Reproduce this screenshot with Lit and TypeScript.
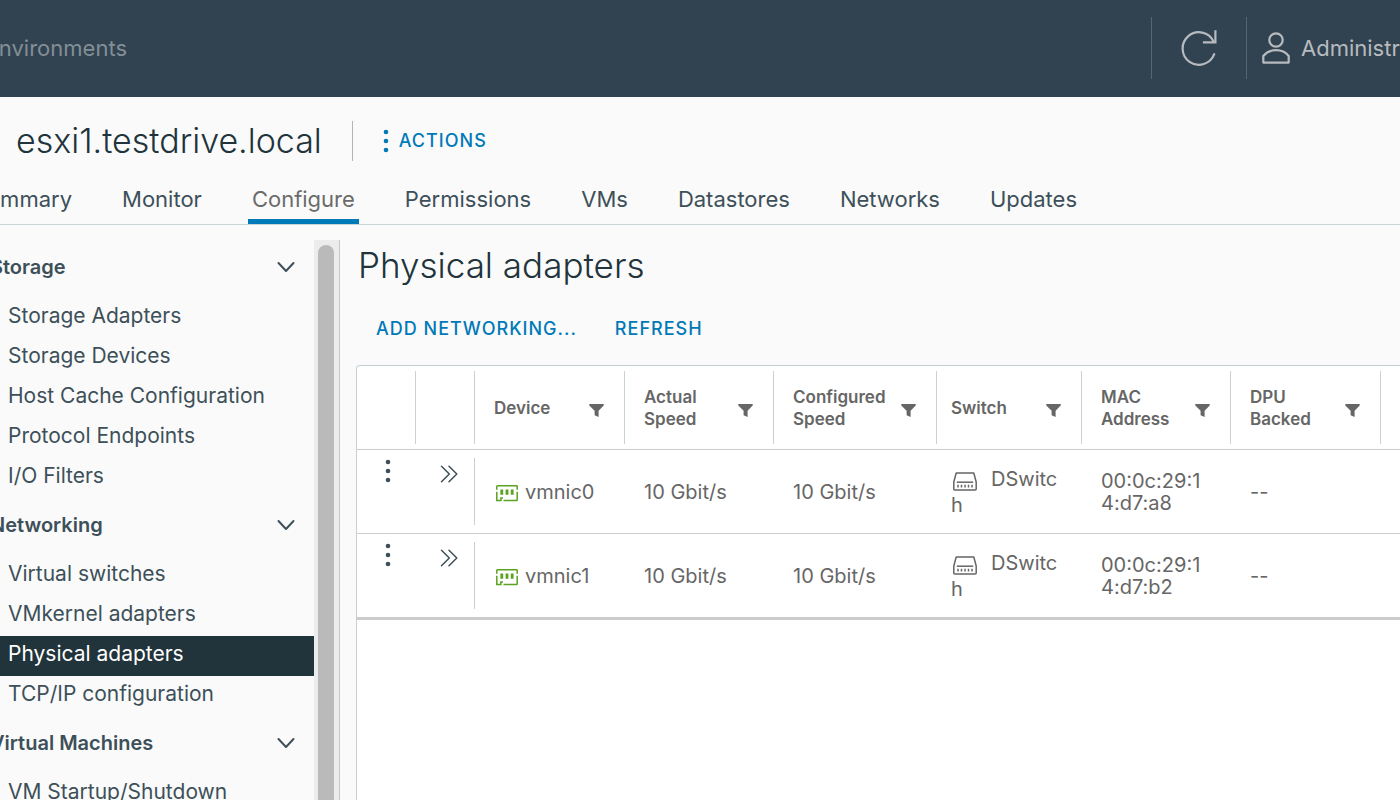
import { LitElement, html, css, svg } from "lit";
import { customElement, state } from "lit/decorators.js";
import { classMap } from "lit/directives/class-map.js";

interface Group {
  title: string;
  items: string[];
}

interface Adapter {
  device: string;
  actual: string;
  configured: string;
  vswitch: string;
  mac: string;
  dpu: string;
}

const TABS = ["Summary", "Monitor", "Configure", "Permissions", "VMs", "Datastores", "Networks", "Updates"];

const GROUPS: Group[] = [
  {
    title: "Storage",
    items: ["Storage Adapters", "Storage Devices", "Host Cache Configuration", "Protocol Endpoints", "I/O Filters"],
  },
  {
    title: "Networking",
    items: ["Virtual switches", "VMkernel adapters", "Physical adapters", "TCP/IP configuration"],
  },
  { title: "Virtual Machines", items: ["VM Startup/Shutdown"] },
];

const COLUMNS = ["Device", "Actual Speed", "Configured Speed", "Switch", "MAC Address", "DPU Backed"];

const ADAPTERS: Adapter[] = [
  { device: "vmnic0", actual: "10 Gbit/s", configured: "10 Gbit/s", vswitch: "DSwitch", mac: "00:0c:29:14:d7:a8", dpu: "--" },
  { device: "vmnic1", actual: "10 Gbit/s", configured: "10 Gbit/s", vswitch: "DSwitch", mac: "00:0c:29:14:d7:b2", dpu: "--" },
];

const dots = html`<svg class="dots" width="6" height="24" viewBox="0 0 6 24" aria-hidden="true">
  ${[3, 12, 21].map((y) => svg`<circle cx="3" cy=${y} r="2.3" fill="currentColor"></circle>`)}
</svg>`;

const refreshIcon = html`<svg width="36" height="38" viewBox="0 0 36 38" fill="none" stroke="currentColor" stroke-width="2.2" stroke-linecap="round" aria-hidden="true">
  <path d="M33.2 25.2A16.3 16.3 0 1 1 32.6 12.4" />
  <path d="M34.4 2.4V13.4H23" stroke-linecap="square" />
</svg>`;

const userIcon = html`<svg width="28" height="32" viewBox="0 0 28 32" fill="none" stroke="currentColor" stroke-width="2.2" stroke-linejoin="round" aria-hidden="true">
  <circle cx="14" cy="8" r="6.7" />
  <path d="M1.3 30.6V24C4.2 20.3 8.8 18.2 14 18.2S23.8 20.3 26.7 24V30.6Z" />
</svg>`;

const chevron = html`<svg width="18" height="12" viewBox="0 0 18 12" fill="none" stroke="currentColor" stroke-width="2" stroke-linecap="round" stroke-linejoin="round" aria-hidden="true">
  <path d="M1.5 2L9 10L16.5 2" />
</svg>`;

const expandIcon = html`<svg width="18" height="18" viewBox="0 0 18 18" fill="none" stroke="currentColor" stroke-width="1.5" stroke-linecap="round" stroke-linejoin="round" aria-hidden="true">
  <path d="M1.5 1.2L9.3 9L1.5 16.8M9 1.2L16.8 9L9 16.8" />
</svg>`;

const filterIcon = html`<svg width="15" height="13" viewBox="0 0 15 13" aria-hidden="true">
  <path d="M0.3 0H14.7V1.5L9.6 6.8V13L5.6 11.2V6.8L0.3 1.5Z" fill="currentColor" />
</svg>`;

const nicIcon = html`<svg class="nic" width="22" height="17" viewBox="0 0 22 17" fill="none" stroke="#5aa220" stroke-width="1.5" aria-hidden="true">
  <path d="M0.8 4.8V1.5Q0.8 0.8 1.5 0.8H20.5Q21.2 0.8 21.2 1.5V4.8" />
  <path d="M21.2 6.8V14.9Q21.2 15.6 20.5 15.6H7.5M0.8 6.8V15.6H4.9V13H7" />
  <path d="M5.8 4.5V9.8M11 4.5V9.8M16.2 4.5V9.8" stroke-width="2.8" />
</svg>`;

const switchIcon = html`<svg class="switch" width="24" height="19" viewBox="0 0 24 19" fill="none" stroke="currentColor" stroke-width="1.5" stroke-linejoin="round" aria-hidden="true">
  <path d="M3.2 1H20.8L23.2 10V17Q23.2 18 22.2 18H1.800Q0.8 18 0.8 17V10Z" />
  <path d="M3.8 10.2H20.2" />
  <path d="M5 12.8V15.6M8.5 12.8V15.6M12 12.8V15.6M15.5 12.8V15.6M19 12.8V15.6" />
</svg>`;

@customElement("app-root")
export class AppRoot extends LitElement {
  @state() private tab = "Configure";
  @state() private item = "Physical adapters";

  static styles = css`
    :host {
      display: flex;
      flex-direction: column;
      height: 100vh;
      overflow: hidden;
      background: #fafafa;
      color: #666;
      font-family: Inter, "Open Sans", sans-serif;
      font-size: 20px;
    }
    * {
      box-sizing: border-box;
    }
    button {
      border: 0;
      padding: 0;
      background: none;
      color: inherit;
      font: inherit;
      cursor: pointer;
    }
    a {
      color: inherit;
      text-decoration: none;
    }
    svg {
      flex: none;
    }
    .top {
      flex: none;
      display: flex;
      align-items: center;
      height: 97px;
      padding-bottom: 2px;
      background: #314351;
      color: #b7bbbf;
    }
    .crumb {
      display: flex;
      justify-content: flex-end;
      width: 127px;
      margin-right: auto;
      overflow: hidden;
      color: #838e97;
      font-size: 22px;
    }
    .reload,
    .user {
      display: flex;
      align-items: center;
      height: 62px;
      border-left: 1px solid #566675;
    }
    .reload {
      justify-content: center;
      width: 95px;
    }
    .user {
      gap: 11px;
      width: 154px;
      padding-left: 15px;
      overflow: hidden;
      font-size: 22px;
    }
    .title {
      flex: none;
      display: flex;
      align-items: center;
      height: 88px;
      padding-left: 16px;
    }
    h1,
    h2 {
      margin: 0;
      color: #21333b;
      font-weight: 300;
      font-size: 35px;
      line-height: 40px;
    }
    .title h1 {
      padding-right: 30px;
      border-right: 1px solid #b3b3b3;
      font-size: 34px;
    }
    .link {
      display: flex;
      align-items: center;
      gap: 10px;
      color: #0079b8;
      font-size: 18px;
      line-height: 24px;
      font-weight: 500;
      letter-spacing: 1px;
    }
    .title .link {
      margin-left: 30px;
    }
    .tabs {
      flex: none;
      display: flex;
      gap: 42px;
      height: 40px;
      margin-left: -31px;
      border-bottom: 1px solid #ccd4d8;
      color: #3d5059;
      font-size: 22px;
    }
    .tab {
      height: 39px;
      padding: 0 4px 6px;
      line-height: 28px;
      border-bottom: 5px solid transparent;
    }
    .tab.active {
      color: #6b6b6b;
      border-color: #0079b8;
    }
    .body {
      flex: 1;
      min-height: 0;
      display: flex;
    }
    .side {
      flex: none;
      display: flex;
      width: 340px;
      padding-top: 15px;
      overflow: hidden;
    }
    .nav {
      flex: 1;
      min-width: 0;
      color: #3d5059;
    }
    .group {
      display: flex;
      align-items: center;
      justify-content: space-between;
      width: 100%;
      height: 58px;
      padding: 0 19px 4px 0;
      font-weight: 600;
      font-size: 20px;
    }
    .group span {
      margin-left: -10px;
    }
    .item {
      display: block;
      height: 40px;
      padding: 0 8px;
      line-height: 36px;
      font-size: 21px;
      white-space: nowrap;
    }
    .item.active {
      background: #21333b;
      color: #fff;
    }
    .track {
      width: 26px;
      padding: 5px 5px 0 4px;
      background: #ececec;
      border-right: 1px solid #c8c8c8;
    }
    .thumb {
      height: 100%;
      border-radius: 8px 8px 0 0;
      background: #bababa;
    }
    .main {
      flex: 1;
      min-width: 0;
      display: flex;
      flex-direction: column;
      padding: 20px 0 0 16px;
      overflow: hidden;
    }
    .main h2 {
      padding-left: 2px;
    }
    .actions {
      display: flex;
      gap: 38px;
      padding: 32px 20px 24px;
    }
    .grid {
      flex: 1;
      border: 1px solid #c5d0d5;
      border-width: 1px 0 0 1px;
      border-radius: 4px 0 0 0;
      background: #fff;
    }
    table {
      width: 100%;
      table-layout: fixed;
      border-collapse: separate;
      border-spacing: 0;
      border-bottom: 3px solid #ccc;
    }
    th,
    td {
      padding: 0 21px 0 19px;
      text-align: left;
      background: linear-gradient(#c8d2d6, #c8d2d6) right center / 1px 0 no-repeat;
    }
    th {
      height: 84px;
      border-bottom: 1px solid #ccc;
      font-size: 17px;
      line-height: 22px;
      font-weight: 600;
      background-size: 1px 73px;
    }
    td {
      height: 84px;
      border-bottom: 1px solid #ccc;
      line-height: 22px;
      word-break: break-all;
    }
    tr:last-child td {
      height: 83px;
      border-bottom: 0;
    }
    thead th:last-child {
      border-bottom: 1px solid #ccc;
      background-size: 0 0;
    }
    td.tool {
      padding: 9px 0 0 3px;
      vertical-align: top;
      text-align: center;
      color: #3d5059;
    }
    td.expand {
      padding: 15px 0 0 6px;
      background-size: 1px 67px;
    }
    td.sw {
      padding-left: 14px;
      line-height: 26px;
    }
    th.sw {
      padding-left: 14px;
    }
    .head {
      display: flex;
      align-items: center;
      justify-content: space-between;
    }
    .head button {
      display: flex;
      padding-top: 5px;
    }
    .nic {
      vertical-align: -3px;
      margin-right: 7px;
      margin-left: 2px;
    }
    .switch {
      vertical-align: -5px;
      margin: 0 14px 0 2px;
    }
    .c59 {
      width: 59px;
    }
    .c145 {
      width: 145px;
    }
    .c149 {
      width: 149px;
    }
    .c150 {
      width: 150px;
    }
    .c163 {
      width: 163px;
    }
  `;

  private renderGroup(g: Group) {
    return html`
      <button class="group"><span>${g.title}</span>${chevron}</button>
      ${g.items.map(
        (name) => html`<a
          href="#"
          class=${classMap({ item: true, active: name === this.item })}
          @click=${(e: Event) => {
            e.preventDefault();
            this.item = name;
          }}
          >${name}</a
        >`
      )}
    `;
  }

  private renderRow(a: Adapter) {
    return html`<tr>
      <td class="tool"><button aria-label="Row actions">${dots}</button></td>
      <td class="tool expand"><button aria-label="Show details">${expandIcon}</button></td>
      <td>${nicIcon}${a.device}</td>
      <td>${a.actual}</td>
      <td>${a.configured}</td>
      <td class="sw">${switchIcon}${a.vswitch}</td>
      <td>${a.mac}</td>
      <td>${a.dpu}</td>
      <td></td>
    </tr>`;
  }

  render() {
    return html`
      <header class="top">
        <div class="crumb">Environments</div>
        <button class="reload" aria-label="Refresh">${refreshIcon}</button>
        <button class="user">${userIcon}<span>Administrator</span></button>
      </header>
      <div class="title">
        <h1>esxi1.testdrive.local</h1>
        <button class="link">${dots}ACTIONS</button>
      </div>
      <nav class="tabs">
        ${TABS.map(
          (t) => html`<button class=${classMap({ tab: true, active: t === this.tab })} @click=${() => (this.tab = t)}>${t}</button>`
        )}
      </nav>
      <div class="body">
        <aside class="side">
          <nav class="nav">${GROUPS.map((g) => this.renderGroup(g))}</nav>
          <div class="track"><div class="thumb"></div></div>
        </aside>
        <main class="main">
          <h2>Physical adapters</h2>
          <div class="actions">
            <button class="link">ADD NETWORKING...</button>
            <button class="link">REFRESH</button>
          </div>
          <div class="grid">
            <table>
              <colgroup>
                <col class="c59" />
                <col class="c59" />
                <col class="c150" />
                <col class="c149" />
                <col class="c163" />
                <col class="c145" />
                <col class="c149" />
                <col class="c150" />
                <col />
              </colgroup>
              <thead>
                <tr>
                  <th></th>
                  <th></th>
                  ${COLUMNS.map(
                    (c) => html`<th class=${c === "Switch" ? "sw" : ""}>
                      <div class="head">${c}<button aria-label="Filter ${c}">${filterIcon}</button></div>
                    </th>`
                  )}
                  <th></th>
                </tr>
              </thead>
              <tbody>
                ${ADAPTERS.map((a) => this.renderRow(a))}
              </tbody>
            </table>
          </div>
        </main>
      </div>
    `;
  }
}
